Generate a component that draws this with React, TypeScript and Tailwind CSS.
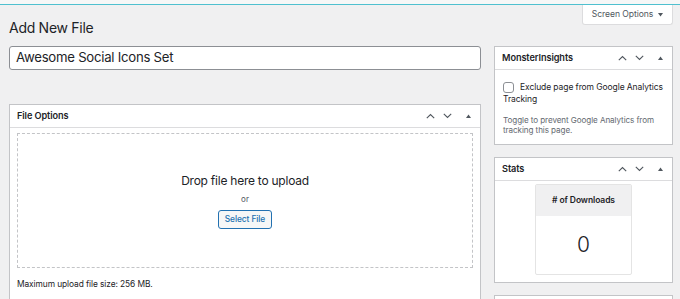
import React from "react";

function Chevron({ dir }: { dir: "up" | "down" }) {
  return (
    <svg width="9" height="6" viewBox="0 0 9 6" className="text-[#50575e]">
      {dir === "up" ? (
        <path d="M0.8 5.2L4.5 1.5l3.7 3.7" fill="none" stroke="currentColor" strokeWidth="1.1" />
      ) : (
        <path d="M0.8 0.8L4.5 4.5l3.7-3.7" fill="none" stroke="currentColor" strokeWidth="1.1" />
      )}
    </svg>
  );
}

function PanelControls() {
  return (
    <div className="flex items-center">
      <span className="w-[17px] flex justify-center"><Chevron dir="up" /></span>
      <span className="w-[17px] flex justify-center"><Chevron dir="down" /></span>
      <span className="w-[24px] flex justify-center">
        <svg width="5" height="4" viewBox="0 0 5 4" className="text-[#50575e]">
          <path d="M0 4L2.5 0.5 5 4z" fill="currentColor" />
        </svg>
      </span>
    </div>
  );
}

function Panel({ title, children }: { title: string; children: React.ReactNode }) {
  return (
    <div className="bg-white border border-[#c3c4c7]">
      <div className="h-[23px] flex items-center justify-between pl-[7px] border-b border-[#dcdcde]">
        <span className="text-[9.2px] font-semibold tracking-[-0.01em] text-[#1d2327]">{title}</span>
        <PanelControls />
      </div>
      {children}
    </div>
  );
}

export default function App() {
  return (
    <div className="w-[680px] h-[299px] overflow-hidden bg-[#f0f0f1] font-['Inter',sans-serif] text-[#1d2327] relative">
      <div className="h-[5px] bg-[#f6f7f7] border-b-[1.5px] border-[#4fc0cf]" />

      {/* Screen options tab */}
      <div className="absolute left-[582px] top-[5px] w-[91px] h-[20px] bg-white border border-t-0 border-[#dcdcde] rounded-b-[3px] flex items-center justify-center gap-[5px] text-[8.6px] tracking-[-0.01em] text-[#50575e]">
        Screen Options
        <svg width="5" height="4" viewBox="0 0 5 4"><path d="M0 0h5L2.5 3.5z" fill="#50575e" /></svg>
      </div>

      <div className="pl-[9px]">
        <h1 className="text-[14px] tracking-[-0.02em] leading-[18px] pt-[14px] font-normal">Add New File</h1>

        <div className="flex gap-[13px] mt-[9px]">
          {/* Main column */}
          <div className="w-[472px] shrink-0">
            <div className="h-[24px] bg-white border border-[#8c8f94] rounded-[3px] flex items-center px-[6px] text-[13.2px] tracking-[-0.02em] text-[#1d2327]">
              Awesome Social Icons Set
            </div>

            <div className="mt-[34px]">
              <Panel title="File Options">
                <div className="px-[7px] pt-[5px] pb-[19px]">
                  <div className="h-[135px] border-[1.5px] border-dashed border-[#c3c4c7] flex flex-col items-center justify-start pt-[39px]">
                    <div className="text-[12px] tracking-[-0.02em] leading-[15px]">Drop file here to upload</div>
                    <div className="text-[8px] text-[#50575e] mt-[6px] leading-[10px]">or</div>
                    <div className="mt-[6px] h-[19px] w-[54px] border border-[#2271b1] rounded-[3px] bg-[#f6f7f7] text-[8.4px] tracking-[-0.01em] font-medium text-[#2271b1] flex items-center justify-center">
                      Select File
                    </div>
                  </div>
                  <div className="text-[8.4px] tracking-[-0.01em] mt-[10px] text-[#1d2327]">Maximum upload file size: 256 MB.</div>
                </div>
              </Panel>
            </div>
          </div>

          {/* Side column */}
          <div className="w-[179px] shrink-0 flex flex-col gap-[12px]">
            <Panel title="MonsterInsights">
              <div className="px-[8px] pt-[11px] pb-[9px]">
                <div className="flex items-center gap-[6px]">
                  <span className="w-[11px] h-[11px] shrink-0 border border-[#8c8f94] rounded-[3px] bg-white" />
                  <span className="text-[8.5px] tracking-[-0.01em] leading-[12px]">Exclude page from Google Analytics</span>
                </div>
                <div className="text-[8.5px] tracking-[-0.01em] leading-[12px]">Tracking</div>
                <div className="text-[8.1px] tracking-[-0.01em] leading-[10px] text-[#646970] mt-[10px] pr-[10px]">
                  Toggle to prevent Google Analytics from tracking this page.
                </div>
              </div>
            </Panel>

            <Panel title="Stats">
              <div className="flex justify-center pt-[3px] pb-[7px]">
                <div className="w-[97px] border border-[#e4e4e4] rounded-[2px] bg-white">
                  <div className="h-[31px] bg-[#f0f0f1] flex items-center justify-center text-[8.5px] tracking-[-0.01em] font-semibold">
                    # of Downloads
                  </div>
                  <div className="h-[58px] flex items-center justify-center text-[21px] font-light">0</div>
                </div>
              </div>
            </Panel>

            <div className="h-[20px] bg-white border border-[#c3c4c7]" />
          </div>
        </div>
      </div>
    </div>
  );
}
